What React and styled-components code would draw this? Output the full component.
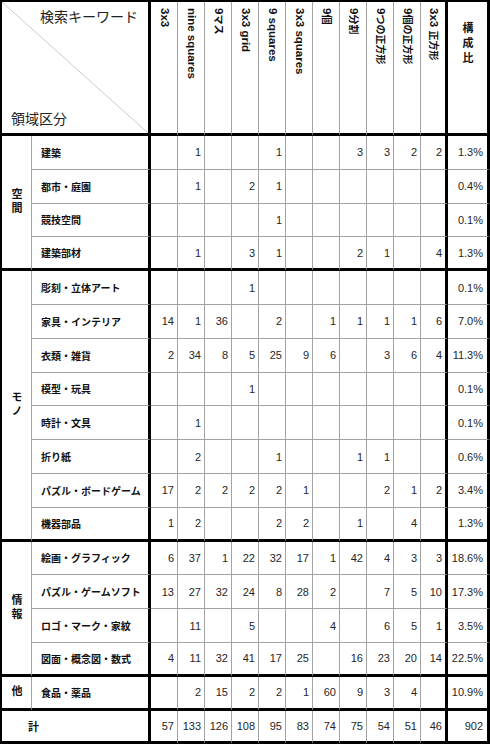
import React from "react";
import styled, { createGlobalStyle } from "styled-components";

const GlobalStyle = createGlobalStyle`
  html, body {
    margin: 0;
    padding: 0;
    background: #fff;
  }
  body {
    font-family: "Liberation Sans", "Noto Sans CJK JP", sans-serif;
    color: #1a1a1a;
  }
`;

const LINE = "1px solid #a3a3a3";
const THICK = "3px solid #000";

const Grid = styled.div`
  display: grid;
  grid-template-columns: 30px 119px repeat(11, 27px) 42px;
  grid-template-rows: 134px repeat(18, 33.8px);
  width: 490px;
  box-sizing: border-box;
  border-left: 2px solid #000;
  border-top: 2px solid #000;
`;

const Cell = styled.div`
  box-sizing: border-box;
  min-width: 0;
  border-right: ${(p) => (p.$thickRight ? THICK : LINE)};
  border-bottom: ${(p) => (p.$thickBottom ? THICK : LINE)};
`;

const Corner = styled(Cell)`
  grid-column: span 2;
  display: flex;
  flex-direction: column;
  justify-content: space-between;
  padding: 7px 10px 8px 9px;
  font-family: "Noto Sans CJK JP", sans-serif;
  font-size: 14px;
  line-height: 1;
  color: #222;
  background: linear-gradient(
    to bottom left,
    transparent calc(50% - 0.7px),
    #c8c8c8 50%,
    transparent calc(50% + 0.7px)
  );
`;

const CornerTop = styled.span`
  align-self: flex-end;
`;

const CornerBottom = styled.span`
  align-self: flex-start;
`;

const KeywordHead = styled(Cell)`
  display: flex;
  justify-content: center;
  align-items: flex-start;
  padding-top: 6px;
`;

const Sideways = styled.span`
  writing-mode: vertical-rl;
  text-orientation: sideways;
  font-family: "Liberation Sans", "Noto Sans CJK JP", sans-serif;
  font-weight: 700;
  font-size: 11.5px;
  line-height: 1;
  white-space: nowrap;
  color: #111;
`;

const Cjk = styled.span`
  font-family: "Noto Sans CJK JP", sans-serif;
  font-size: 10px;
`;

const RatioHead = styled(Cell)`
  display: flex;
  justify-content: center;
  align-items: flex-start;
  padding-top: 20px;
`;

// upright vertical text (構成比, 空間, モノ ...)
const Upright = styled.span`
  writing-mode: vertical-rl;
  text-orientation: upright;
  white-space: nowrap;
  font-family: "Noto Sans CJK JP", sans-serif;
  font-weight: 700;
  font-size: 11px;
  letter-spacing: ${(p) => p.$gap}px;
  line-height: 1;
  color: #111;
`;

const GroupLabel = styled(Cell)`
  grid-row: span ${(p) => p.$span};
  display: flex;
  align-items: center;
  justify-content: center;
`;

const ItemLabel = styled(Cell)`
  display: flex;
  align-items: center;
  padding-left: 9px;
  font-family: "Noto Sans CJK JP", sans-serif;
  font-weight: 700;
  font-size: 10px;
  white-space: nowrap;
  color: #111;
`;

const TotalLabel = styled(Cell)`
  grid-column: span 2;
  display: flex;
  align-items: center;
  padding-left: 26px;
  font-family: "Noto Sans CJK JP", sans-serif;
  font-weight: 700;
  font-size: 11px;
  color: #111;
`;

const NumCell = styled(Cell)`
  display: flex;
  align-items: center;
  justify-content: flex-end;
  padding-right: ${(p) => (p.$ratio ? 4 : 3)}px;
  font-family: "Liberation Sans", sans-serif;
  font-size: 11px;
  color: #262626;
`;

const keywords = [
  "3x3",
  "nine squares",
  "9マス",
  "3x3 grid",
  "9 squares",
  "3x3 squares",
  "9個",
  "9分割",
  "9つの正方形",
  "9個の正方形",
  "3x3 正方形",
];

const _ = null;

const groups = [
  {
    name: "空間",
    rows: [
      ["建築", [_, 1, _, _, 1, _, _, 3, 3, 2, 2], "1.3%"],
      ["都市・庭園", [_, 1, _, 2, 1, _, _, _, _, _, _], "0.4%"],
      ["競技空間", [_, _, _, _, 1, _, _, _, _, _, _], "0.1%"],
      ["建築部材", [_, 1, _, 3, 1, _, _, 2, 1, _, 4], "1.3%"],
    ],
  },
  {
    name: "モノ",
    rows: [
      ["彫刻・立体アート", [_, _, _, 1, _, _, _, _, _, _, _], "0.1%"],
      ["家具・インテリア", [14, 1, 36, _, 2, _, 1, 1, 1, 1, 6], "7.0%"],
      ["衣類・雑貨", [2, 34, 8, 5, 25, 9, 6, _, 3, 6, 4], "11.3%"],
      ["模型・玩具", [_, _, _, 1, _, _, _, _, _, _, _], "0.1%"],
      ["時計・文具", [_, 1, _, _, _, _, _, _, _, _, _], "0.1%"],
      ["折り紙", [_, 2, _, _, 1, _, _, 1, 1, _, _], "0.6%"],
      ["パズル・ボードゲーム", [17, 2, 2, 2, 2, 1, _, _, 2, 1, 2], "3.4%"],
      ["機器部品", [1, 2, _, _, 2, 2, _, 1, _, 4, _], "1.3%"],
    ],
  },
  {
    name: "情報",
    rows: [
      ["絵画・グラフィック", [6, 37, 1, 22, 32, 17, 1, 42, 4, 3, 3], "18.6%"],
      ["パズル・ゲームソフト", [13, 27, 32, 24, 8, 28, 2, _, 7, 5, 10], "17.3%"],
      ["ロゴ・マーク・家紋", [_, 11, _, 5, _, _, 4, _, 6, 5, 1], "3.5%"],
      ["図面・概念図・数式", [4, 11, 32, 41, 17, 25, _, 16, 23, 20, 14], "22.5%"],
    ],
  },
  {
    name: "他",
    rows: [["食品・薬品", [_, 2, 15, 2, 2, 1, 60, 9, 3, 4, _], "10.9%"]],
  },
];

const totals = [57, 133, 126, 108, 95, 83, 74, 75, 54, 51, 46];

// split a header into latin / japanese runs so the kana get their own size
const renderKeyword = (text) =>
  text.split(/([\u3000-\u9fff]+)/).map((part, i) =>
    /[\u3000-\u9fff]/.test(part) ? <Cjk key={i}>{part}</Cjk> : part
  );

const NumberRow = ({ values, ratio, last }) => (
  <>
    {values.map((v, i) => (
      <NumCell key={i} $thickRight={i === values.length - 1} $thickBottom={last}>
        {v}
      </NumCell>
    ))}
    <NumCell $ratio $thickRight $thickBottom={last}>
      {ratio}
    </NumCell>
  </>
);

export default function App() {
  return (
    <>
      <GlobalStyle />
      <Grid>
        <Corner $thickRight $thickBottom>
          <CornerTop>検索キーワード</CornerTop>
          <CornerBottom>領域区分</CornerBottom>
        </Corner>
        {keywords.map((k, i) => (
          <KeywordHead key={k} $thickRight={i === keywords.length - 1} $thickBottom>
            <Sideways>{renderKeyword(k)}</Sideways>
          </KeywordHead>
        ))}
        <RatioHead $thickRight $thickBottom>
          <Upright $gap={4}>構成比</Upright>
        </RatioHead>

        {groups.map((g) => (
          <React.Fragment key={g.name}>
            <GroupLabel $span={g.rows.length} $thickBottom>
              <Upright $gap={3}>{g.name}</Upright>
            </GroupLabel>
            {g.rows.map(([label, values, ratio], r) => {
              const last = r === g.rows.length - 1;
              return (
                <React.Fragment key={label}>
                  <ItemLabel $thickRight $thickBottom={last}>
                    {label}
                  </ItemLabel>
                  <NumberRow values={values} ratio={ratio} last={last} />
                </React.Fragment>
              );
            })}
          </React.Fragment>
        ))}

        <TotalLabel $thickRight $thickBottom>
          計
        </TotalLabel>
        <NumberRow values={totals} ratio="902" last />
      </Grid>
    </>
  );
}
